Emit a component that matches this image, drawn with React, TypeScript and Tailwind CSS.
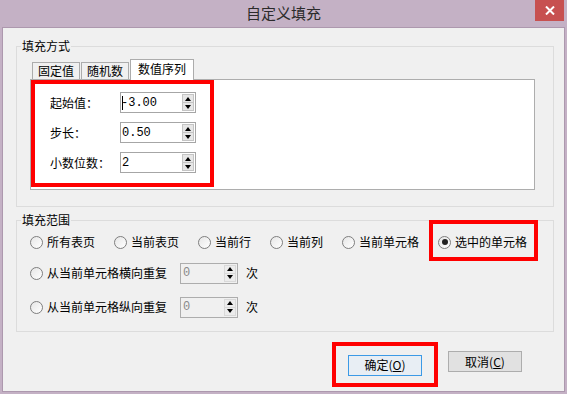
const cjk = { fontFamily: '"Noto Sans CJK SC", "Noto Sans", sans-serif' };
const mono = { fontFamily: '"Liberation Mono", monospace' };

function Spin({ disabled }: { disabled?: boolean }) {
  const arrow = disabled ? 'border-[#8a8a8a]' : 'border-[#111]';
  return (
    <div className="flex flex-col w-[12px] my-[1px] mr-[1px]">
      <div className={`flex-1 flex items-center justify-center border ${disabled ? 'border-[#d9d9d9] bg-[#ececec]' : 'border-[#c4c4c4] bg-[#e6e6e6]'}`}>
        <span className={`w-0 h-0 border-x-[3px] border-x-transparent border-b-[4px] ${arrow.replace('border-', 'border-b-')}`} />
      </div>
      <div className={`flex-1 flex items-center justify-center border border-t-0 ${disabled ? 'border-[#d9d9d9] bg-[#ececec]' : 'border-[#c4c4c4] bg-[#e6e6e6]'}`}>
        <span className={`w-0 h-0 border-x-[3px] border-x-transparent border-t-[4px] ${arrow.replace('border-', 'border-t-')}`} />
      </div>
    </div>
  );
}

function NumField({ value, caret }: { value: string; caret?: boolean }) {
  return (
    <div className="flex w-[76px] h-[21px] border border-[#a6a6a6] bg-white">
      <div className="flex-1 flex items-center pl-[1px] text-[12px] text-black" style={mono}>
        {caret && <span className="inline-block w-px h-[14px] bg-black" />}
        <span className={caret ? '-ml-[2px]' : ''}>{value}</span>
      </div>
      <Spin />
    </div>
  );
}

function Radio({ label, checked }: { label: string; checked?: boolean }) {
  return (
    <div className="flex items-center gap-[4px] h-[16px]">
      <span className="w-[13px] h-[13px] rounded-full border border-[#7e7e7e] bg-gradient-to-br from-[#e6e6e6] to-white flex items-center justify-center">
        {checked && <span className="w-[6px] h-[6px] rounded-full bg-[#222]" />}
      </span>
      <span className="text-[12px] leading-[16px] text-black">{label}</span>
    </div>
  );
}

function RepeatRow({ label }: { label: string }) {
  return (
    <div className="flex items-center h-[20px]">
      <div className="w-[150px]">
        <Radio label={label} />
      </div>
      <div className="flex w-[58px] h-[21px] border border-[#adadad] bg-[#f0f0f0]">
        <div className="flex-1 flex items-center pl-[2px] text-[12px] text-[#8a8a8a]" style={mono}>0</div>
        <Spin disabled />
      </div>
      <span className="ml-[8px] text-[12px] text-black">次</span>
    </div>
  );
}

export default function App() {
  const tabs = ['固定值', '随机数'];
  return (
    <div className="w-[567px] h-[394px] bg-[#c4b1c5] flex flex-col" style={cjk}>
      <div className="relative h-[27px] flex items-center justify-center">
        <span className="text-[15px] text-[#2b2b2b]">自定义填充</span>
        <div className="absolute right-[3px] top-0 w-[29px] h-[21px] bg-[#c75050] flex items-center justify-center">
          <svg width="10" height="9" viewBox="0 0 10 9">
            <path d="M1 0.5 L9 8.5 M9 0.5 L1 8.5" stroke="white" strokeWidth="2" />
          </svg>
        </div>
      </div>

      <div className="mx-[2px] h-[365px] border border-[#ad98ae] bg-[#f0f0f0] flex flex-col">
        <fieldset className="mt-[10px] ml-[13px] w-[538px] border border-[#dcdcdc] pb-[16px]">
          <legend className="ml-[4px] px-[1px] text-[12px] leading-[16px] text-black">填充方式</legend>
          <div className="ml-[13px] mt-[5px]">
            <div className="flex items-end ml-[2px]">
              {tabs.map((t) => (
                <div key={t} className="h-[17px] px-[5px] mr-px border border-b-0 border-[#acacac] bg-[#f0f0f0] text-[12px] leading-[16px] text-black">
                  {t}
                </div>
              ))}
              <div className="relative z-10 -mb-px h-[21px] px-[7px] border border-b-0 border-[#acacac] bg-white text-[12px] leading-[18px] text-black">
                数值序列
              </div>
            </div>
            <div className="w-[505px] h-[111px] border border-[#adadad] bg-white">
              <div className="w-[183px] h-[107px] border-4 border-[#ff0000] pt-[8px] pl-[15px] flex flex-col gap-[9px]">
                {[
                  ['起始值：', '-3.00', true],
                  ['步长：', '0.50', false],
                  ['小数位数：', '2', false],
                ].map(([l, v, c]) => (
                  <div key={l as string} className="flex items-center">
                    <span className="w-[70px] text-[12px] text-black">{l as string}</span>
                    <NumField value={v as string} caret={c as boolean} />
                  </div>
                ))}
              </div>
            </div>
          </div>
        </fieldset>

        <fieldset className="mt-[5px] ml-[13px] w-[538px] border border-[#dcdcdc] pb-[14px]">
          <legend className="ml-[4px] px-[1px] text-[12px] leading-[16px] text-black">填充范围</legend>
          <div className="pl-[13px] pt-[6px] flex flex-col">
            <div className="flex items-center gap-[19px]">
              <Radio label="所有表页" />
              <Radio label="当前表页" />
              <Radio label="当前行" />
              <Radio label="当前列" />
              <Radio label="当前单元格" />
              <div className="relative">
                <Radio label="选中的单元格" checked />
                <span className="absolute -left-[9px] -right-[11px] -top-[14px] -bottom-[11px] border-4 border-[#ff0000]" />
              </div>
            </div>
            <div className="mt-[13px]">
              <RepeatRow label="从当前单元格横向重复" />
            </div>
            <div className="mt-[14px]">
              <RepeatRow label="从当前单元格纵向重复" />
            </div>
          </div>
        </fieldset>

        <div className="mt-[19px] mr-[42px] flex justify-end gap-[26px]">
          <div className="relative">
            <button className="w-[74px] h-[21px] border border-[#3c9ae6] bg-[#e8eef4] text-[12px] leading-[18px] text-black">
              确定(<span className="underline">O</span>)
            </button>
            <span className="absolute -left-[16px] -right-[16px] -top-[9px] -bottom-[11px] border-4 border-[#ff0000]" />
          </div>
          <button className="w-[74px] h-[21px] border border-[#adadad] bg-[#e1e1e1] text-[12px] leading-[18px] text-black">
            取消(<span className="underline">C</span>)
          </button>
        </div>
      </div>
    </div>
  );
}
